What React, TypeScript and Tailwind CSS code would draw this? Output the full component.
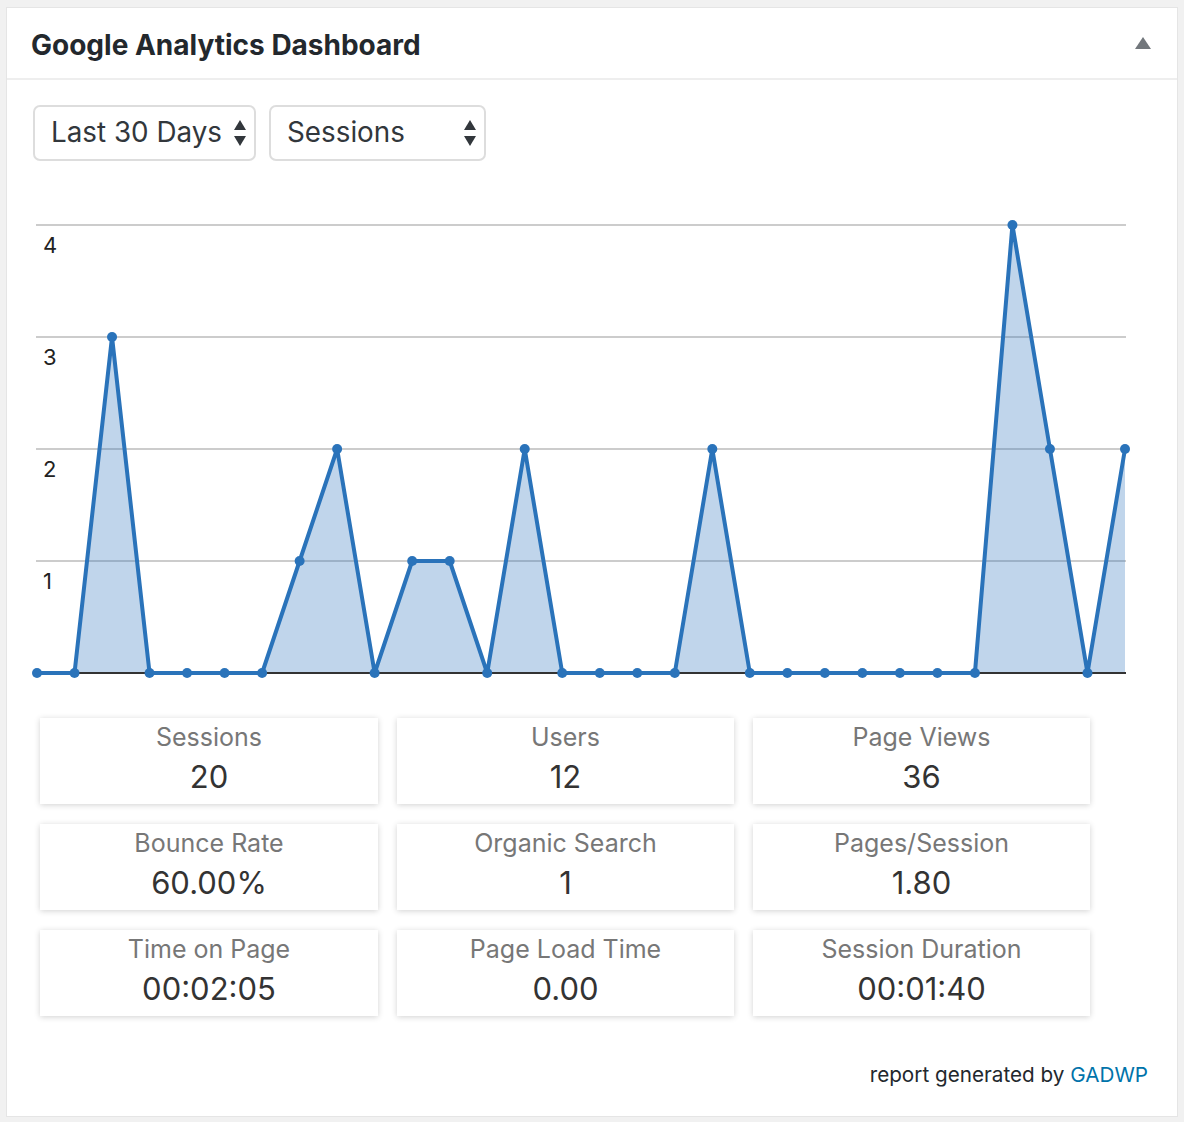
import React from 'react';

const sessions = [0, 0, 3, 0, 0, 0, 0, 1, 2, 0, 1, 1, 0, 2, 0, 0, 0, 0, 2, 0, 0, 0, 0, 0, 0, 0, 4, 2, 0, 2];

const stats = [
  { label: 'Sessions', value: '20' },
  { label: 'Users', value: '12' },
  { label: 'Page Views', value: '36' },
  { label: 'Bounce Rate', value: '60.00%' },
  { label: 'Organic Search', value: '1' },
  { label: 'Pages/Session', value: '1.80' },
  { label: 'Time on Page', value: '00:02:05' },
  { label: 'Page Load Time', value: '0.00' },
  { label: 'Session Duration', value: '00:01:40' },
];

const SelectArrows = () => (
  <svg width="14" height="28" viewBox="0 0 14 28" className="shrink-0">
    <polygon points="7,1 13,11 1,11" fill="#32373c" />
    <polygon points="1,17 13,17 7,27" fill="#32373c" />
  </svg>
);

const SessionsChart = () => {
  const base = 472;
  const unit = 112;
  const step = 37.517;
  const pts = sessions.map((v, i) => [7 + i * step, base - v * unit]);
  const line = pts.map(([x, y]) => `${x},${y}`).join(' ');
  const area = `${pts[0][0]},${base} ${line} ${pts[pts.length - 1][0]},${base}`;

  return (
    <svg width="1100" height="490" viewBox="0 0 1100 490" className="block">
      {[4, 3, 2, 1].map((v) => (
        <g key={v}>
          <line x1="6" x2="1096" y1={base - v * unit} y2={base - v * unit} stroke="#cccccc" strokeWidth="2" />
          <text x="13" y={base - v * unit + 28} fontSize="22" fill="#222" fontFamily="Inter, sans-serif">
            {v}
          </text>
        </g>
      ))}
      <polygon points={area} fill="#2f75bc" fillOpacity="0.3" />
      <line x1="6" x2="1096" y1={base} y2={base} stroke="#333" strokeWidth="2" />
      <polyline points={line} fill="none" stroke="#2a73ba" strokeWidth="4" strokeLinejoin="round" />
      {pts.map(([x, y], i) => (
        <circle key={i} cx={x} cy={y} r="5" fill="#2a73ba" />
      ))}
    </svg>
  );
};

export default function App() {
  return (
    <div className="min-h-[1122px] bg-[#f1f1f1] pt-[7px] pl-[6px] pr-[6px] pb-[6px]" style={{ fontFamily: 'Inter, "Noto Sans", sans-serif' }}>
      <div className="w-[1172px] h-[1110px] bg-white border border-[#e5e5e5] flex flex-col">
        {/* header */}
        <div className="h-[72px] border-b-2 border-[#eeeeee] flex items-center justify-between pl-[24px] pr-[26px]">
          <h2 className="text-[28px] font-bold text-[#23282d] tracking-[0px] pt-[3px]">Google Analytics Dashboard</h2>
          <svg width="16" height="12" viewBox="0 0 16 12">
            <polygon points="8,0 16,12 0,12" fill="#72777c" />
          </svg>
        </div>

        {/* selects */}
        <div className="flex gap-[13px] pl-[26px] pt-[25px]">
          <div className="w-[223px] h-[56px] rounded-[7px] border-2 border-[#dddddd] flex items-center justify-between pl-[16px] pr-[7px] text-[27.8px] text-[#32373c]">
            <span>Last 30 Days</span>
            <SelectArrows />
          </div>
          <div className="w-[217px] h-[56px] rounded-[7px] border-2 border-[#dddddd] flex items-center justify-between pl-[16px] pr-[7px] text-[27.8px] text-[#32373c]">
            <span>Sessions</span>
            <SelectArrows />
          </div>
        </div>

        {/* chart */}
        <div className="pl-[23px] pt-[40px]">
          <SessionsChart />
        </div>

        {/* stats */}
        <div className="grid grid-cols-[338px_337px_337px] gap-x-[19px] gap-y-[20px] pl-[33px] pt-[27px]">
          {stats.map((s) => (
            <div key={s.label} className="h-[86px] bg-white shadow-[0_1px_6px_rgba(0,0,0,0.18)] flex flex-col items-center pt-[2px]">
              <div className="text-[25px] leading-[34px] text-[#777777]">{s.label}</div>
              <div className="text-[31px] leading-[40px] mt-[3px] text-[#333333]">{s.value}</div>
            </div>
          ))}
        </div>

        {/* footer */}
        <div className="mt-auto pb-[26px] pr-[29px] text-right text-[20.7px] text-[#23282d]">
          report generated by <span className="text-[#0073aa]">GADWP</span>
        </div>
      </div>
    </div>
  );
}
